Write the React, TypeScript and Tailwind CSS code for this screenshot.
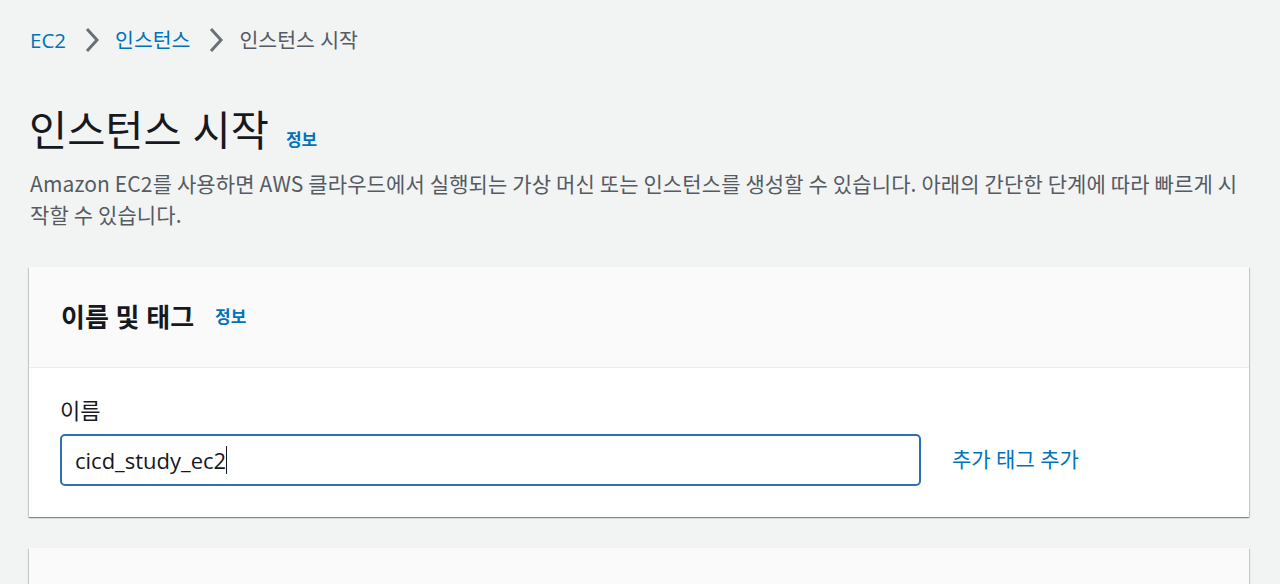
import React from 'react';

const font = { fontFamily: '"Open Sans", "Noto Sans CJK KR", sans-serif' };
const cjkFirst = { fontFamily: '"Noto Sans CJK KR", "Open Sans", sans-serif' };

function Chevron() {
  return (
    <svg width="16" height="26" viewBox="0 0 16 26" className="ml-[18px] mr-[15px]">
      <path d="M3 2 L13 13 L3 24" fill="none" stroke="#687078" strokeWidth="3" />
    </svg>
  );
}

export default function App() {
  return (
    <div
      className="min-h-[584px] bg-[#f2f3f3] pl-[29px] pr-[31px] text-[#16191f] overflow-hidden"
      style={font}
    >
      <nav className="flex items-center pt-[26px] h-[54px] text-[20.5px] leading-[28px]">
        <span className="text-[#0073bb] pl-px">EC2</span>
        <Chevron />
        <span className="text-[#0073bb]">인스턴스</span>
        <Chevron />
        <span className="text-[#545b64]">인스턴스 시작</span>
      </nav>

      <div className="mt-[50px] flex items-baseline">
        <h1 className="text-[41.5px] leading-[52px] font-normal">인스턴스 시작</h1>
        <span className="ml-[17px] text-[17px] font-bold text-[#0073bb]">정보</span>
      </div>

      <p
        className="mt-[12px] text-[21px] leading-[31px] tracking-[0.12px] text-[#545b64] pl-px"
        style={cjkFirst}
      >
        Amazon EC2를 사용하면 AWS 클라우드에서 실행되는 가상 머신 또는 인스턴스를 생성할 수 있습니다. 아래의 간단한 단계에 따라 빠르게 시작할 수 있습니다.
      </p>

      <section className="mt-[37px] bg-white shadow-[0_1px_1px_0_rgba(0,28,36,0.3),1px_1px_1px_0_rgba(0,28,36,0.15),-1px_1px_1px_0_rgba(0,28,36,0.15)]">
        <div className="h-[101px] flex items-center px-[32px] bg-[#fafafa] border-b border-[#eaeded]">
          <h2 className="text-[26px] font-bold">이름 및 태그</h2>
          <span className="ml-[21px] text-[17px] font-bold text-[#0073bb]">정보</span>
        </div>
        <div className="pt-[30px] pb-[31px] px-[31px]">
          <div className="text-[22px] leading-[24px] text-[#16191f]">이름</div>
          <div className="mt-[12px] flex items-center">
            <div className="w-[861px] h-[52px] border-2 border-[#2e6fb6] rounded-[5px] flex items-center px-[13px] text-[22px]">
              <span>cicd_study_ec2</span>
              <span className="w-px h-[28px] bg-[#16191f]" />
            </div>
            <span className="ml-[31px] text-[21px] text-[#0073bb]">추가 태그 추가</span>
          </div>
        </div>
      </section>

      <section className="mt-[31px] h-[60px] bg-[#fafafa] shadow-[0_1px_1px_0_rgba(0,28,36,0.3),1px_1px_1px_0_rgba(0,28,36,0.15),-1px_1px_1px_0_rgba(0,28,36,0.15)]" />
    </div>
  );
}
